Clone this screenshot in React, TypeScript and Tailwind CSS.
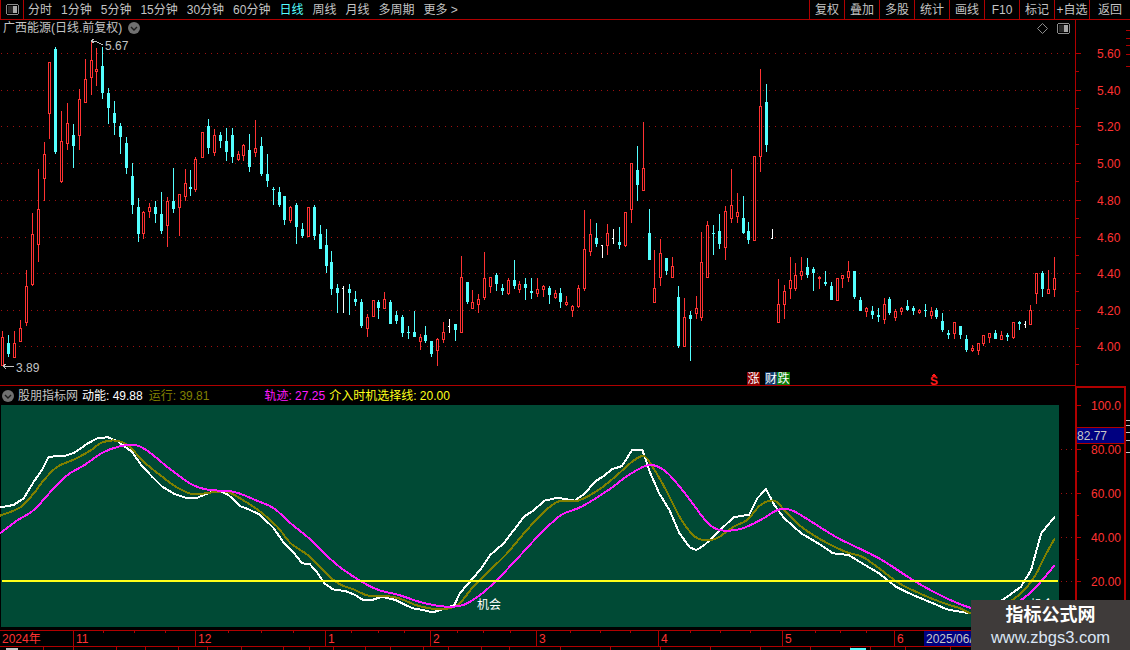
import React from "react";

type C = [number, number, number, number, number, "r" | "c" | "w"];
const candles: C[] = [
[2,331,366,337,366,"r"],[8,335,357,343,354,"c"],[14,331,358,343,358,"r"],[20,320,342,328,342,"r"],[26,270,326,286,323,"r"],[32,213,286,234,285,"r"],[38,169,262,209,245,"r"],[44,142,201,154,179,"r"],[49,62,139,62,114,"r"],[55,47,154,49,152,"c"],[61,111,183,141,182,"r"],[67,103,150,123,144,"r"],[73,124,168,135,146,"c"],[79,89,150,99,136,"r"],[85,59,103,79,103,"r"],[91,40,95,60,78,"r"],[96,48,86,69,72,"r"],[102,47,99,66,93,"c"],[108,88,124,93,108,"c"],[114,101,135,113,123,"c"],[120,123,154,126,137,"c"],[126,137,174,143,168,"c"],[132,163,214,176,205,"c"],[138,198,242,207,234,"c"],[143,211,239,212,234,"r"],[149,203,218,207,212,"r"],[155,201,223,207,214,"c"],[161,192,234,214,231,"c"],[167,197,247,201,226,"r"],[173,168,213,201,209,"c"],[179,194,236,194,208,"r"],[185,169,201,183,197,"r"],[190,170,196,187,189,"c"],[195,157,192,159,190,"r"],[202,132,158,132,158,"r"],[208,119,154,126,148,"c"],[214,129,156,135,153,"r"],[220,132,148,135,141,"c"],[226,128,161,141,152,"c"],[232,128,163,135,157,"c"],[238,151,161,154,160,"r"],[243,144,161,145,156,"r"],[249,134,172,150,167,"c"],[255,120,157,148,153,"r"],[261,137,176,146,174,"c"],[267,154,187,174,181,"c"],[273,187,205,189,189,"c"],[279,187,207,192,205,"c"],
[284,196,225,196,220,"c"],[290,206,223,207,221,"r"],[296,203,244,205,227,"c"],[302,223,238,229,236,"c"],[308,207,237,207,237,"r"],[314,205,240,207,236,"c"],[320,225,249,234,249,"c"],[326,229,273,245,266,"c"],[331,251,295,262,289,"c"],[337,284,313,288,293,"c"],[343,286,313,288,288,"w"],[349,284,315,289,293,"c"],[355,291,306,299,302,"c"],[361,299,328,302,326,"c"],[367,314,337,317,329,"r"],[373,300,317,300,317,"r"],[378,300,319,302,308,"c"],[384,292,309,299,309,"r"],[390,300,324,302,324,"c"],[396,311,324,315,321,"c"],[402,315,337,317,333,"c"],[408,326,339,332,332,"c"],[414,311,337,332,337,"c"],[420,334,350,337,342,"r"],[425,326,343,335,341,"c"],[431,341,357,341,354,"c"],[437,338,366,339,351,"r"],[443,322,343,332,340,"r"],[449,319,333,326,326,"w"],[455,324,341,324,330,"c"],[461,256,333,277,333,"r"],[467,282,304,282,302,"c"],[472,290,309,302,309,"r"],[478,294,313,299,305,"r"],[484,252,300,278,298,"r"],[490,277,293,277,287,"r"],[496,273,291,275,284,"c"],[502,284,295,288,291,"c"],[508,278,295,280,294,"r"],[514,260,289,280,286,"c"],[519,281,293,284,290,"r"],[525,278,300,284,288,"c"],[531,278,299,291,293,"c"],[537,278,297,289,294,"r"],[543,285,297,286,290,"r"],[549,286,304,288,295,"c"],[555,290,299,293,298,"r"],
[560,288,308,293,302,"c"],[566,296,306,302,305,"r"],[572,305,317,306,311,"r"],[578,285,308,288,307,"r"],[584,210,291,249,289,"r"],[590,219,256,234,252,"r"],[596,223,247,238,244,"c"],[602,245,258,245,245,"w"],[607,224,255,233,246,"r"],[613,229,244,238,238,"w"],[619,227,249,242,245,"c"],[625,212,247,212,246,"r"],[631,163,223,163,210,"r"],[637,146,201,170,185,"c"],[643,122,191,168,191,"r"],[649,209,260,233,260,"c"],[654,250,303,288,303,"r"],[660,239,286,253,278,"r"],[666,258,275,258,271,"c"],[672,257,278,266,278,"r"],[678,286,348,297,346,"c"],[684,298,347,317,347,"r"],[690,311,361,315,319,"c"],[696,296,319,308,314,"r"],[701,232,321,262,318,"r"],[707,221,278,225,278,"r"],[713,225,255,233,233,"c"],[719,214,249,231,244,"c"],[725,206,260,211,248,"r"],[731,169,223,205,219,"r"],[737,193,223,212,217,"r"],[743,196,234,218,233,"c"],[748,222,244,231,240,"c"],[754,156,241,156,241,"r"],[760,69,172,106,157,"r"],[766,84,152,102,145,"c"],[772,229,239,238,238,"w"],[778,279,323,304,323,"r"],[784,285,319,291,305,"r"],[790,257,299,280,289,"r"],[795,263,291,275,289,"r"],[801,257,280,271,276,"r"],[807,258,278,267,275,"c"],[813,267,291,269,273,"c"],[819,276,289,277,279,"r"],[825,271,286,282,284,"c"],[831,282,300,286,300,"c"],[837,278,301,278,301,"r"],
[842,275,288,275,279,"r"],[848,261,282,271,278,"r"],[854,271,299,271,297,"c"],[860,297,311,300,311,"c"],[866,307,317,308,312,"r"],[872,306,319,311,315,"c"],[878,308,322,315,317,"c"],[884,298,324,304,320,"r"],[889,297,315,299,313,"c"],[895,309,321,311,318,"r"],[901,307,315,308,312,"r"],[907,300,311,306,310,"c"],[913,306,315,308,311,"c"],[919,309,314,310,313,"r"],[925,304,317,310,310,"c"],[931,307,319,311,316,"r"],[936,308,319,310,317,"c"],[942,313,332,321,330,"c"],[948,330,339,333,335,"c"],[954,322,339,322,334,"r"],[960,326,339,326,335,"c"],[966,335,352,339,350,"c"],[972,345,352,348,351,"r"],[978,343,355,343,351,"r"],[983,335,346,335,344,"r"],[989,333,343,333,338,"r"],[995,330,339,333,339,"c"],[1001,331,340,335,340,"r"],[1007,333,341,335,337,"c"],[1013,322,339,322,338,"r"],[1019,321,330,322,324,"c"],[1025,321,328,324,324,"w"],[1030,305,325,310,325,"r"],[1036,273,304,273,294,"r"],[1042,271,297,273,289,"c"],[1048,270,294,289,294,"r"],[1054,257,297,278,290,"r"],
];

const colour = { r: "#ff3232", c: "#54ffff", w: "#ffffff" };
const toReal = (a: number[][]) => a.map(([x, y]) => [x / 1.479, 430 + y / 3]);
const toPts = (a: number[][]) => toReal(a).map(([x, y]) => x.toFixed(1) + "," + y.toFixed(1)).join(" ");
const smooth = (a: number[][]) => {
  const p = toReal(a);
  let d = "M" + p[0][0].toFixed(1) + " " + p[0][1].toFixed(1);
  for (let i = 0; i < p.length - 1; i++) {
    const p0 = p[Math.max(0, i - 1)];
    const p1 = p[i];
    const p2 = p[i + 1];
    const p3 = p[Math.min(p.length - 1, i + 2)];
    d += " C" + (p1[0] + (p2[0] - p0[0]) / 6).toFixed(1) + " " + (p1[1] + (p2[1] - p0[1]) / 6).toFixed(1) + " " + (p2[0] - (p3[0] - p1[0]) / 6).toFixed(1) + " " + (p2[1] - (p3[1] - p1[1]) / 6).toFixed(1) + " " + p2[0].toFixed(1) + " " + p2[1].toFixed(1);
  }
  return d;
};

const white = [[0,232],[20,225],[35,205],[50,155],[62,120],[72,80],[95,78],[110,68],[130,40],[145,24],[160,22],[175,35],[195,65],[210,108],[225,140],[240,170],[258,192],[275,203],[292,203],[310,188],[325,182],[338,195],[355,228],[370,240],[385,255],[405,295],[420,340],[435,370],[447,400],[458,402],[470,430],[480,460],[492,478],[512,484],[525,495],[537,510],[550,510],[565,500],[585,510],[610,535],[625,540],[640,547],[655,538],[672,525],[680,490],[695,455],[712,415],[725,375],[745,340],[760,300],[775,260],[790,240],[805,212],[825,203],[850,212],[865,190],[880,155],[895,135],[905,118],[920,108],[935,60],[950,60],[962,130],[975,190],[990,240],[1005,310],[1020,352],[1030,360],[1042,345],[1060,310],[1085,262],[1108,254],[1120,205],[1133,177],[1145,225],[1160,265],[1185,310],[1210,340],[1232,370],[1255,375],[1275,400],[1300,430],[1325,470],[1350,495],[1380,520],[1400,538],[1420,545],[1440,552],[1460,540],[1490,500],[1510,470],[1525,420],[1540,310],[1560,260]];
const olive = [[0,257],[30,232],[50,190],[65,150],[85,110],[110,88],[135,60],[150,38],[172,32],[190,48],[215,100],[240,140],[260,170],[285,193],[310,188],[335,185],[355,205],[385,245],[410,290],[430,340],[455,375],[480,425],[500,460],[525,480],[545,497],[570,498],[590,505],[615,525],[640,536],[665,535],[680,520],[700,470],[725,420],[750,370],[775,310],[800,255],[825,215],[855,212],[885,180],[910,140],[935,95],[952,78],[965,110],[985,180],[1005,260],[1025,315],[1040,330],[1060,325],[1085,290],[1105,270],[1125,225],[1145,212],[1160,240],[1185,290],[1215,330],[1250,365],[1275,380],[1300,415],[1330,460],[1360,490],[1390,515],[1420,535],[1440,550],[1480,530],[1510,490],[1530,440],[1545,380],[1560,325]];
const magenta = [[0,310],[25,272],[50,240],[75,185],[100,135],[125,105],[150,70],[175,50],[200,45],[220,65],[250,115],[285,165],[310,180],[345,185],[380,212],[405,235],[430,280],[460,330],[485,380],[505,415],[535,455],[560,480],[590,495],[625,518],[660,530],[685,525],[710,495],[735,450],[770,375],[800,310],[830,255],[860,230],[900,180],[930,135],[960,105],[985,125],[1015,195],[1045,275],[1065,300],[1095,297],[1125,270],[1150,240],[1170,240],[1200,275],[1240,325],[1300,385],[1350,450],[1390,495],[1430,530],[1470,545],[1510,510],[1535,465],[1560,405]];

const grid = [53, 90, 126, 163, 200, 237, 273, 310, 346];
const priceLabels = ["5.60", "5.40", "5.20", "5.00", "4.80", "4.60", "4.40", "4.20", "4.00"];
const oscLabels: [string, number][] = [["100.0", 405], ["80.00", 449], ["60.00", 493], ["40.00", 537], ["20.00", 581]];
const tools = ["分时", "1分钟", "5分钟", "15分钟", "30分钟", "60分钟"];
const tools2 = ["周线", "月线", "多周期", "更多 >"];
const right = ["复权", "叠加", "多股", "统计", "画线", "F10", "标记", "+自选"];
const months: [string, number][] = [["2024年", 73], ["11", 122], ["12", 130], ["1", 105], ["2", 106], ["3", 122], ["4", 124], ["5", 112], ["6", 30]];
const minorTicks = [103, 134, 165, 228, 261, 293, 351, 378, 404, 457, 483, 510, 570, 600, 630, 690, 720, 750, 815, 840, 866];
const tabSeps = [43, 73, 116, 145, 178, 207, 241, 283, 309, 333, 365, 390, 423, 448, 481, 509, 560, 610, 660, 710, 760, 810, 850, 870, 905, 950];

function SidePanelIcon() {
  return (
    <svg width="13" height="11" viewBox="0 0 13 11" className="block" shapeRendering="crispEdges">
      <rect x="0.5" y="0.5" width="12" height="10" rx="2" fill="none" stroke="#8c8c8c" />
      <rect x="7" y="2" width="4" height="7" fill="#a8a8a8" />
      <rect x="2" y="2" width="5" height="7" fill="#262626" />
    </svg>
  );
}

function DownCircle() {
  return (
    <svg width="12" height="12" viewBox="0 0 12 12" className="block">
      <circle cx="6" cy="6" r="6" fill="#707070" />
      <path d="M3 5 L6 8 L9 5" fill="none" stroke="#1c1c1c" strokeWidth="1.4" />
    </svg>
  );
}

export default function App() {
  return (
    <div className="relative flex h-[650px] w-[1130px] flex-col overflow-hidden bg-black font-['Liberation_Sans','Noto_Sans_CJK_SC',sans-serif] text-xs text-[#c4c4c4]">
      {/* toolbar */}
      <div className="flex h-5 shrink-0 items-center border-b border-[#b00000]">
        <div className="flex h-full w-6 items-center justify-center border-x border-[#b00000]">
          <SidePanelIcon />
        </div>
        <div className="ml-1 flex items-center gap-[9px] leading-none">
          {tools.map((t) => (
            <span key={t}>{t}</span>
          ))}
          <span className="text-[#54ffff]">日线</span>
          {tools2.map((t) => (
            <span key={t}>{t}</span>
          ))}
        </div>
        <div className="ml-auto flex h-full">
          {right.map((t) => (
            <div key={t} className="flex w-[35px] items-center justify-center border-l border-[#b00000] leading-none">
              {t}
            </div>
          ))}
          <div className="flex w-[41px] items-center justify-center border-l border-[#b00000] leading-none">返回</div>
        </div>
      </div>

      <div className="flex min-h-0 flex-1">
        {/* charts column */}
        <div className="flex w-[1075px] shrink-0 flex-col">
          <div className="relative h-[366px] shrink-0 border-b border-[#b00000]">
            <svg className="block" width="1075" height="365" viewBox="0 20 1075 365" shapeRendering="crispEdges">
              {grid.map((y) => (
                <line key={y} x1="1" x2="1075" y1={y + 0.5} y2={y + 0.5} stroke="#a01010" strokeDasharray="1 5" />
              ))}
              {candles.map(([x, hi, lo, top, bot, k], i) => {
                const col = colour[k];
                return (
                  <g key={i}>
                    <rect x={x} y={hi} width="1" height={lo - hi} fill={col} />
                    {k === "w" ? (
                      <rect x={x - 1} y={top} width="1" height="1" fill={col} />
                    ) : (
                      <rect x={x - 1} y={top} width="3" height={Math.max(1, bot - top)} fill={col} />
                    )}
                    {k === "r" && bot - top > 2 && <rect x={x} y={top + 1} width="1" height={bot - top - 2} fill="#000" />}
                  </g>
                );
              })}
              <polyline points="91,41 95,41 103,45" fill="none" stroke="#c4c4c4" />
              <polyline points="94,39 91,41 94,43" fill="none" stroke="#c4c4c4" />
              <line x1="3" x2="14" y1="366.5" y2="366.5" stroke="#c4c4c4" />
              <polyline points="6,364 3,366 6,369" fill="none" stroke="#c4c4c4" />
              <text x="105" y="50" fill="#c4c4c4" fontSize="12" shapeRendering="auto">5.67</text>
              <text x="16" y="372" fill="#c4c4c4" fontSize="12" shapeRendering="auto">3.89</text>
              <path d="M934 373 L931.5 376 H936.5 Z" fill="#ff1a1a" />
            </svg>
            <div className="absolute inset-x-0 top-[2px] flex items-center pl-[3px] pr-[3px] leading-none">
              <span>广西能源(日线.前复权)</span>
              <span className="ml-[6px]"><DownCircle /></span>
              <span className="ml-auto mr-[2px] flex items-center gap-[9px]">
                <svg width="11" height="11" viewBox="0 0 11 11" className="block"><path d="M5.5 0.5 L10.5 5.5 L5.5 10.5 L0.5 5.5 Z" fill="none" stroke="#8c8c8c" /></svg>
                <SidePanelIcon />
              </span>
            </div>
            <span className="absolute left-[747px] top-[352px] flex h-[13px] w-[13px] items-center justify-center bg-[#8b0000] leading-none text-white">涨</span>
            <span className="absolute left-[765px] top-[352px] flex h-[13px] w-[12px] items-center justify-center bg-[#123a6b] leading-none text-white">财</span>
            <span className="absolute left-[777px] top-[352px] flex h-[13px] w-[13px] items-center justify-center bg-[#0a7a0a] leading-none text-white">跌</span>
            <span className="absolute left-[930px] top-[355px] font-bold leading-[12px] text-[#ff1a1a]">S</span>
          </div>

          {/* indicator header */}
          <div className="flex h-[19px] shrink-0 items-center whitespace-pre pl-[2px] leading-none">
            <DownCircle />
            <span className="ml-[4px]">股朋指标网</span>
            <span className="ml-[4px] text-white">动能: 49.88</span>
            <span className="ml-[6px] text-[#808000]">运行: 39.81</span>
            <span className="ml-[55px] text-[#ff1aff]">轨迹: 27.25</span>
            <span className="ml-[4px] text-[#ffff1a]">介入时机选择线: 20.00</span>
          </div>

          {/* indicator body */}
          <div className="h-[225px] shrink-0">
            <div className="ml-px h-[222px] w-[1058px] bg-[#004a35]">
              <svg className="block overflow-visible" width="1058" height="222" viewBox="1 405 1058 222" shapeRendering="crispEdges">
                {[449, 493, 537, 581].map((y) => (
                  <line key={y} x1="1061" x2="1075" y1={y + 0.5} y2={y + 0.5} stroke="#a01010" strokeDasharray="1 4" />
                ))}
                <polyline points={toPts(white)} fill="none" stroke="#ffffff" strokeWidth="2" />
                <path d={smooth(olive)} fill="none" stroke="#808000" strokeWidth="2" />
                <path d={smooth(magenta)} fill="none" stroke="#ff1aff" strokeWidth="2" />
                <line x1="2" x2="1058" y1="581" y2="581" stroke="#ffff1a" strokeWidth="2" />
                <text x="477" y="609" fill="#ffffff" fontSize="12" shapeRendering="auto">机会</text>
                <text x="1030" y="609" fill="#ffffff" fontSize="12" shapeRendering="auto">机会</text>
              </svg>
            </div>
          </div>
        </div>

        {/* axis column */}
        <div className="flex w-[51px] shrink-0 flex-col">
          <div className="h-[366px] shrink-0 border-l border-[#b00000]">
            <svg className="block" width="50" height="366" viewBox="1076 20 50 366" shapeRendering="crispEdges">
              {grid.map((y, i) => (
                <g key={y}>
                  <rect x="1076" y={y} width="5" height="1" fill="#b00000" />
                  <rect x="1076" y={y + 18} width="3" height="1" fill="#b00000" />
                  <text x="1097" y={y + 5} fill="#ff3232" fontSize="12" shapeRendering="auto">{priceLabels[i]}</text>
                </g>
              ))}
            </svg>
          </div>
          <div className="flex-1 border-x-2 border-t-2 border-[#b00000]">
            <svg className="block" width="47" height="240" viewBox="1077 388 47 240" shapeRendering="crispEdges">
              <rect x="1077" y="428" width="47" height="15" fill="#000080" />
              <rect x="1077" y="427" width="47" height="1" fill="#b00000" />
              <rect x="1077" y="443" width="47" height="1" fill="#b00000" />
              <text x="1077" y="440" fill="#c8c8c8" fontSize="12" shapeRendering="auto">82.77</text>
              {oscLabels.map(([t, y]) => (
                <g key={t}>
                  <rect x="1077" y={y} width="4" height="1" fill="#b00000" />
                  <text x="1091" y={y + 5} fill="#ff3232" fontSize="12" shapeRendering="auto">{t}</text>
                </g>
              ))}
              {[427, 471, 515, 559, 603].map((y) => (
                <rect key={y} x="1077" y={y} width="2" height="1" fill="#b00000" />
              ))}
            </svg>
          </div>
        </div>

        {/* thin strip */}
        <div className="flex-1">
          <svg className="block" width="4" height="630" viewBox="0 0 4 630" shapeRendering="crispEdges">
            {[10, 18, 25, 34, 46, 400, 405, 412, 420, 432].map((y) => (
              <rect key={y} x="0" y={y} width="4" height="1" fill={y > 100 ? "#c4c4c4" : "#b00000"} />
            ))}
          </svg>
        </div>
      </div>

      {/* time axis overlapping the bottom of the charts column */}
      <div className="absolute bottom-[3px] left-0 flex h-[17px] w-[1130px] border-y border-[#b00000] leading-none text-[#ff3232]">
        {months.map(([t, w], i) => (
          <div key={t} style={{ width: w }} className={"flex shrink-0 items-center pl-[2px] " + (i ? "border-l border-[#b00000]" : "")}>
            {t}
          </div>
        ))}
        <div className="flex flex-1 items-center bg-[#000080] text-[#c8c8c8]">
          <span className="pl-[2px]">2025/06/30</span>
        </div>
        <svg className="absolute -top-px left-0" width="900" height="3" shapeRendering="crispEdges">
          {minorTicks.map((x) => (
            <rect key={x} x={x} y="0" width="1" height="3" fill="#b00000" />
          ))}
        </svg>
      </div>

      {/* clipped tab row */}
      <div className="absolute bottom-0 left-0 h-[3px] w-[1000px]">
        <svg className="block" width="1000" height="3" shapeRendering="crispEdges">
          {tabSeps.map((x) => (
            <rect key={x} x={x} y="0" width="1" height="3" fill="#b00000" />
          ))}
          <rect x="850" y="1" width="16" height="2" fill="#54ffff" />
          <rect x="6" y="1" width="12" height="2" fill="#c4c4c4" />
        </svg>
      </div>

      {/* watermark */}
      <div className="absolute bottom-0 right-0 flex h-[50px] w-[159px] flex-col items-center justify-center bg-[#3f3b3a]">
        <span className="text-[18px] font-bold leading-[24px] text-white">指标公式网</span>
        <span className="text-[16.5px] leading-[20px] text-[#dbe6f5]">www.zbgs3.com</span>
      </div>
    </div>
  );
}
